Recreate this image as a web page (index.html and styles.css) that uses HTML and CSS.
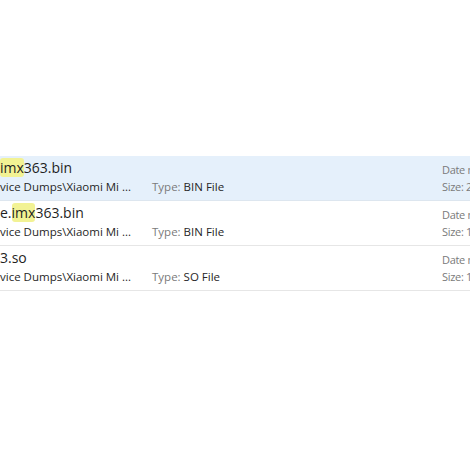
FILE: index.html
```html
<!DOCTYPE html>
<html>
<head>
<meta charset="utf-8">
<link rel="stylesheet" href="styles.css">
</head>
<body>
<div class="results">
  <div class="row selected">
    <div class="col name">
      <div class="title"><span class="hit">imx</span>363.bin</div>
      <div class="path">vice Dumps\Xiaomi Mi ...</div>
    </div>
    <div class="col type">
      <div class="title">&nbsp;</div>
      <div class="path"><span class="label">Type:</span> BIN File</div>
    </div>
    <div class="col meta">
      <div class="line"><span class="label">Date m</span></div>
      <div class="line"><span class="label">Size: 2</span></div>
    </div>
  </div>
  <div class="row">
    <div class="col name">
      <div class="title">e.<span class="hit">imx</span>363.bin</div>
      <div class="path">vice Dumps\Xiaomi Mi ...</div>
    </div>
    <div class="col type">
      <div class="title">&nbsp;</div>
      <div class="path"><span class="label">Type:</span> BIN File</div>
    </div>
    <div class="col meta">
      <div class="line"><span class="label">Date m</span></div>
      <div class="line"><span class="label">Size: 1</span></div>
    </div>
  </div>
  <div class="row">
    <div class="col name">
      <div class="title">3.so</div>
      <div class="path">vice Dumps\Xiaomi Mi ...</div>
    </div>
    <div class="col type">
      <div class="title">&nbsp;</div>
      <div class="path"><span class="label">Type:</span> SO File</div>
    </div>
    <div class="col meta">
      <div class="line"><span class="label">Date m</span></div>
      <div class="line"><span class="label">Size: 1</span></div>
    </div>
  </div>
</div>
</body>
</html>
```

FILE: styles.css
```css
html, body {
  margin: 0;
  padding: 0;
  background: #ffffff;
  width: 470px;
  height: 449px;
  overflow: hidden;
}

body {
  font-family: "Open Sans", "Noto Sans", sans-serif;
  color: #1f1f1f;
}

.results {
  padding-top: 156px;
}

.row {
  display: grid;
  grid-template-columns: 152px 290px 1fr;
  height: 44px;
  border-bottom: 1px solid #e6e6e6;
  white-space: nowrap;
}

.row.selected {
  background: #e5f0fb;
  border-bottom-color: #dde6ef;
}

.col {
  padding-top: 2px;
  min-width: 0;
}

.title {
  font-size: 14px;
  line-height: 20px;
  color: #1f1f1f;
}

.hit {
  background: #f2f294;
  border-radius: 3px;
}

.path {
  font-size: 11.5px;
  line-height: 18px;
  color: #262626;
}

.label {
  color: #7a7a7a;
}

.meta {
  padding-top: 5px;
}

.meta .line {
  font-size: 11px;
  line-height: 17px;
  letter-spacing: -0.3px;
}
```
